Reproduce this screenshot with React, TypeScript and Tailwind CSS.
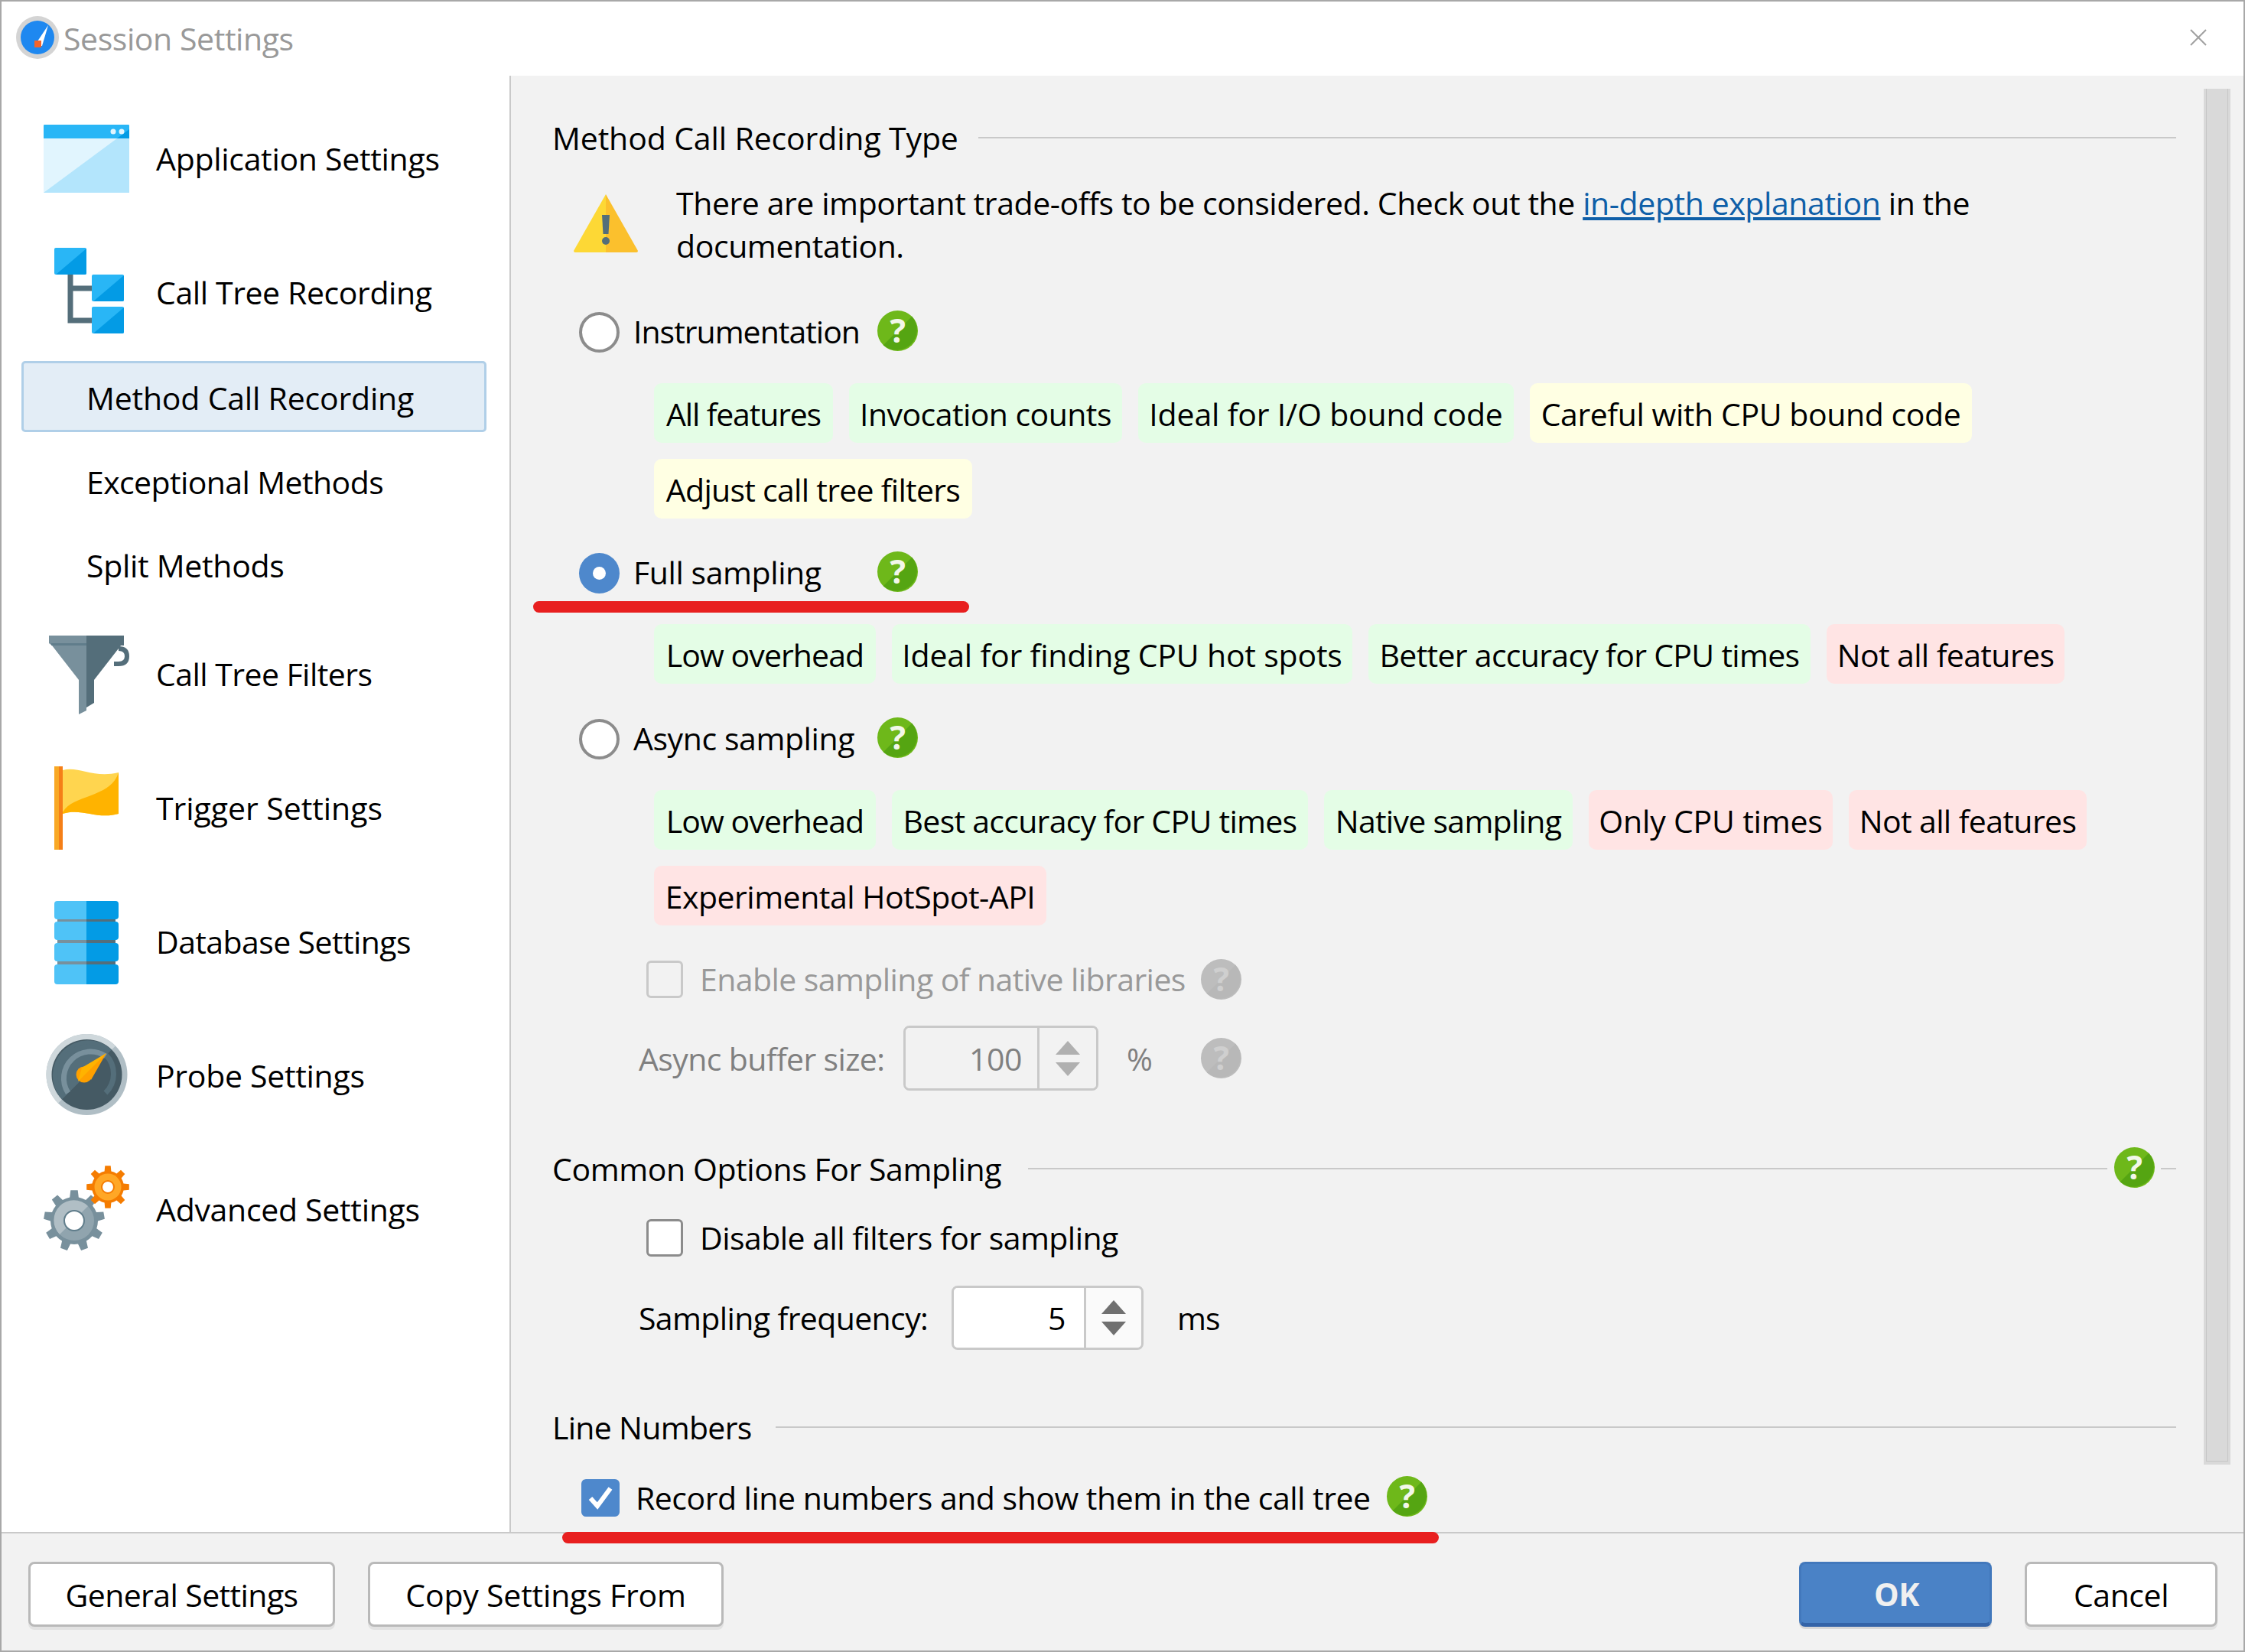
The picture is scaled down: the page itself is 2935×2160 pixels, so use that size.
import React from "react";

function gearPath(cx: number, cy: number, r: number, rr: number, teeth: number) {
  const pts: string[] = [];
  const step = (Math.PI * 2) / teeth;
  for (let i = 0; i < teeth; i++) {
    const a = i * step - Math.PI / 2;
    const seq: [number, number][] = [
      [a - step * 0.5, rr],
      [a - step * 0.27, rr],
      [a - step * 0.17, r],
      [a + step * 0.17, r],
      [a + step * 0.27, rr],
    ];
    for (const [t, d] of seq) {
      pts.push(`${(cx + Math.cos(t) * d).toFixed(1)},${(cy + Math.sin(t) * d).toFixed(1)}`);
    }
  }
  return "M" + pts.join("L") + "Z";
}

const AppIcon = () => (
  <svg width="112" height="112" viewBox="0 0 112 112" className="overflow-visible">
    <rect x="0" y="10" width="112" height="89" fill="#b3e5fc" />
    <path d="M0 28H96L0 99Z" fill="#e1f5fe" />
    <path d="M1 10H111Q112 10 112 12V28H0V12Q0 10 1 10Z" fill="#29b6f6" />
    <path d="M96 28L112 16V28Z" fill="#039be5" />
    <circle cx="91" cy="19" r="3.5" fill="#e1f5fe" />
    <circle cx="102" cy="19" r="3.5" fill="#e1f5fe" />
  </svg>
);

const Sq = ({ x, y }: { x: number; y: number }) => (
  <g>
    <rect x={x} y={y} width="42" height="35" rx="2" fill="#29b6f6" />
    <path d={`M${x + 42} ${y + 1}V${y + 33}Q${x + 42} ${y + 35} ${x + 40} ${y + 35}H${x + 2}Z`} fill="#039be5" />
  </g>
);

const TreeIcon = () => (
  <svg width="112" height="112" viewBox="0 0 112 112" className="overflow-visible">
    <path d="M35 30V91H64M35 49H64" fill="none" stroke="#546e7a" strokeWidth="7" />
    <Sq x={14} y={-4} />
    <Sq x={63} y={31} />
    <Sq x={63} y={73} />
  </svg>
);

const FunnelIcon = () => (
  <svg width="112" height="112" viewBox="0 0 112 112" className="overflow-visible">
    <path d="M92 41H98Q109 41 109 31Q109 21 98 21" fill="none" stroke="#546e7a" strokeWidth="6" />
    <path d="M11 17H56V102L46 107V62Z" fill="#78909c" />
    <path d="M56 17H101L66 62V92L56 98Z" fill="#546e7a" />
    <path d="M7 4H56V17H11L7 14Z" fill="#78909c" />
    <path d="M56 4H105V17H56Z" fill="#546e7a" />
    <rect x="10" y="14" width="46" height="3" fill="#607d8b" />
  </svg>
);

const FlagIcon = () => (
  <svg width="112" height="112" viewBox="0 0 112 112" className="overflow-visible">
    <rect x="14" y="0" width="6" height="109" fill="#f9a825" />
    <rect x="20" y="0" width="5" height="109" fill="#f57f17" />
    <path d="M25 5C45 -1 65 16 98 8V62C70 70 50 54 25 62Z" fill="#ffd54f" />
    <path d="M25 60C32 48 46 44 62 38C80 31 93 24 98 8V62C70 70 50 54 25 62Z" fill="#ffb300" />
  </svg>
);

const DbIcon = () => (
  <svg width="112" height="112" viewBox="0 0 112 112" className="overflow-visible">
    <rect x="18" y="24" width="38" height="62" fill="#78909c" />
    <rect x="56" y="24" width="38" height="62" fill="#546e7a" />
    {[[1, 24], [28, 24], [56, 24], [84, 26]].map(([y, h]) => (
      <g key={y}>
        <path d={`M18 ${y}H56V${y + h}H18Q14 ${y + h} 14 ${y + h - 4}V${y + 4}Q14 ${y} 18 ${y}Z`} fill="#4fc3f7" />
        <path d={`M56 ${y}H94Q98 ${y} 98 ${y + 4}V${y + h - 4}Q98 ${y + h} 94 ${y + h}H56Z`} fill="#039be5" />
      </g>
    ))}
  </svg>
);

const GaugeIcon = () => (
  <svg width="112" height="112" viewBox="0 0 112 112" className="overflow-visible">
    <circle cx="56.5" cy="53" r="53" fill="#b0bec5" />
    <path d="M19 90.5A53 53 0 0 1 94 15.5Z" fill="#cfd8dc" />
    <circle cx="56.5" cy="53" r="46" fill="#455a64" />
    <path d="M24 85.5A46 46 0 0 1 89 20.5Z" fill="#546e7a" />
    <path d="M32 77A35 35 0 1 1 81 77" fill="none" stroke="#546e7a" strokeWidth="7" />
    <path d="M32 77A35 35 0 0 1 81 29" fill="none" stroke="#78909c" strokeWidth="7" />
    <path d="M50 46L82 25L62 60Z" fill="#ffa000" />
    <circle cx="53" cy="53" r="10.5" fill="#ffa000" />
    <path d="M50 44L82 25L45 62Z" fill="#ffb300" />
  </svg>
);

const GearIcon = () => (
  <svg width="112" height="112" viewBox="0 0 112 112" className="overflow-visible">
    <path d={gearPath(40, 69, 40, 31, 9)} fill="#78909c" />
    <path d={gearPath(84, 25, 28, 21, 8)} fill="#f57c00" />
    <circle cx="40" cy="69" r="26" fill="#90a4ae" />
    <path d="M21 87A26 26 0 0 1 58 50Z" fill="#b0bec5" />
    <circle cx="40" cy="69" r="13" fill="#fff" stroke="#607d8b" strokeWidth="2" />
    <circle cx="84" cy="25" r="17.5" fill="#ffa726" />
    <circle cx="84" cy="25" r="8" fill="#fff" stroke="#f57c00" strokeWidth="2" />
  </svg>
);

const Help = ({ off }: { off?: boolean }) => (
  <svg width="53" height="53" viewBox="0 0 53 53" className={`shrink-0 overflow-visible ${off ? "" : "-mt-[4px]"}`}>
    <circle cx="26.5" cy="26.5" r="26.5" fill={off ? "#bdbdbd" : "#6eb81a"} />
    <path d="M45.2 7.8A26.5 26.5 0 0 1 7.8 45.2Z" fill={off ? "#b8b8b8" : "#55a512"} />
    <text x="26.5" y="42" textAnchor="middle" fontSize="43" fontWeight="700" fontFamily="'Open Sans', sans-serif" fill={off ? "#cfcfcf" : "#f2f7ea"}>?</text>
  </svg>
);

const Arrows = ({ color }: { color: string }) => (
  <svg width="32" height="46" viewBox="0 0 32 46">
    <path d="M16 0L32 18H0Z" fill={color} />
    <path d="M16 46L32 28H0Z" fill={color} />
  </svg>
);

const Spinner = ({ value, w, h, field, pr, off }: { value: string; w: string; h: string; field: string; pr: string; off?: boolean }) => (
  <div className={`flex ${w} ${h} border-[3px] border-[#c9c9c9] rounded-[8px] overflow-hidden`}>
    <div className={`${field} ${pr} h-full flex items-center justify-end border-r-[3px] border-[#c9c9c9] ${off ? "bg-[#f2f2f2] text-[#808080]" : "bg-white text-black"}`}>{value}</div>
    <div className={`flex-1 flex items-center justify-center ${off ? "bg-[#f2f2f2]" : "bg-[#fafafa]"}`}>
      <Arrows color={off ? "#b0b0b0" : "#707070"} />
    </div>
  </div>
);

const Radio = ({ on, label, track }: { on?: boolean; label: string; track?: string }) => (
  <div className="flex items-center h-[60px] ml-[34px]">
    {on ? (
      <div className="w-[53px] h-[53px] rounded-full bg-[#4e88cc] flex items-center justify-center shrink-0">
        <div className="w-[17px] h-[17px] rounded-full bg-white" />
      </div>
    ) : (
      <div className="w-[53px] h-[53px] rounded-full bg-white border-[4px] border-[#8c8c8c] shrink-0" />
    )}
    <div className={`w-[319px] ml-[18px] -mt-[2px] whitespace-nowrap ${track ?? ""}`}>{label}</div>
    <Help />
  </div>
);

const Tag = ({ c, t, w, track }: { c: "g" | "y" | "r"; t: string; w: string; track: string }) => (
  <div className={`${w} ${track} h-[78px] pt-[2px] flex items-center justify-center rounded-[10px] whitespace-nowrap shrink-0 ${c === "g" ? "bg-[#e4fde6]" : c === "y" ? "bg-[#ffffe3]" : "bg-[#ffe4e4]"}`}>{t}</div>
);

const Header = ({ t, help, track, gap }: { t: string; help?: boolean; track?: string; gap: string }) => (
  <div className="flex items-center h-[60px]">
    <div className={`whitespace-nowrap -ml-[1px] ${track ?? ""}`}>{t}</div>
    <div className={`flex-1 h-[2px] bg-[#c9c9c9] ${gap}`} />
    {help && (
      <>
        <div className="ml-[9px]"><Help /></div>
        <div className="w-[20px] h-[2px] bg-[#c9c9c9] ml-[8px]" />
      </>
    )}
  </div>
);

const NavBig = ({ icon, label, track }: { icon: React.ReactNode; label: string; track?: string }) => (
  <div className="flex items-center h-[175px]">
    <div className="ml-[55px] w-[112px] h-[112px] shrink-0">{icon}</div>
    <div className={`ml-[35px] -mt-[4px] whitespace-nowrap ${track ?? ""}`}>{label}</div>
  </div>
);

const Btn = ({ t, w, track }: { t: string; w: string; track?: string }) => (
  <div className={`${w} ${track ?? ""} h-[85px] bg-white border-[3px] border-[#b9b9b9] rounded-[8px] shadow-[0_4px_0_#e2e2e2] flex items-center justify-center text-black`}>{t}</div>
);

export default function App() {
  return (
    <div className="relative w-[2935px] h-[2160px] flex flex-col border-2 border-[#a8a8a8] bg-white text-black text-[41px] leading-[56px] tracking-[-0.42px] font-['Open_Sans','Noto_Sans',sans-serif] overflow-hidden">
      {/* title bar */}
      <div className="h-[97px] shrink-0 flex items-center relative bg-white">
        <svg width="56" height="56" viewBox="0 0 56 56" className="ml-[19px] -mt-[4px]">
          <circle cx="28" cy="28" r="28" fill="#d4d4d4" />
          <circle cx="28" cy="28" r="22" fill="#1e88f0" />
          <path d="M42 12L34 39H24Z" fill="#fff" />
          <rect x="24" y="32" width="9" height="9" fill="#f4642c" />
        </svg>
        <div className="ml-[6px] -mt-[2px] text-[#999999]">Session Settings</div>
        <svg width="22" height="22" viewBox="0 0 22 22" className="absolute right-[48px] top-[36px]">
          <path d="M1 1L21 21M21 1L1 21" stroke="#a0a0a0" strokeWidth="2" />
        </svg>
      </div>

      <div className="flex-1 flex min-h-0">
        {/* sidebar */}
        <div className="w-[666px] shrink-0 border-r-[2px] border-[#c9c9c9] bg-white pt-[22px] tracking-[-0.3px]">
          <NavBig icon={<AppIcon />} label="Application Settings" />
          <NavBig icon={<TreeIcon />} label="Call Tree Recording" track="tracking-[-0.4px]" />
          <div className="mt-[1px] ml-[26px] w-[608px] h-[93px] pt-[2px] bg-[#e3edf6] border-[3px] border-[#b0cfe8] rounded-[5px] flex items-center pl-[82px] whitespace-nowrap tracking-[-0.2px]">Method Call Recording</div>
          <div className="mt-[12px] h-[108px] pb-[2px] flex items-center pl-[111px] whitespace-nowrap tracking-[-0.6px]">Exceptional Methods</div>
          <div className="h-[108px] flex items-center pl-[111px] whitespace-nowrap">Split Methods</div>
          <div className="mt-[2px]">
            <NavBig icon={<FunnelIcon />} label="Call Tree Filters" track="tracking-[-0.55px]" />
            <NavBig icon={<FlagIcon />} label="Trigger Settings" track="tracking-[-0.05px]" />
            <NavBig icon={<DbIcon />} label="Database Settings" track="tracking-[-0.6px]" />
            <NavBig icon={<GaugeIcon />} label="Probe Settings" />
            <NavBig icon={<GearIcon />} label="Advanced Settings" />
          </div>
        </div>

        {/* content */}
        <div className="flex-1 flex bg-[#f2f2f2] min-w-0">
          <div className="w-[2122px] ml-[55px] pt-[51px] shrink-0">
            <Header t="Method Call Recording Type" track="tracking-[-0.13px]" gap="ml-[26px]" />
            <div className="mt-[27px] h-[114px] flex items-start">
              <svg width="84" height="76" viewBox="0 0 84 76" className="ml-[27px] mt-[17px] shrink-0">
                <path d="M42 0L84 74Q84 76 82 76H42Z" fill="#fbc02d" />
                <path d="M42 0L0 74Q0 76 2 76H42Z" fill="#fdd835" />
                <path d="M37 27H47L45.5 52H38.5Z" fill="#546e7a" />
                <circle cx="42" cy="61" r="5" fill="#546e7a" />
              </svg>
              <div className="ml-[50px] w-[1900px]">
                There are important trade-offs to be considered. Check out the{" "}
                <span className="text-[#0f5fa8] underline">in-depth explanation</span> in the documentation.
              </div>
            </div>

            <div className="mt-[53px]"><Radio label="Instrumentation" track="tracking-[-1px]" /></div>
            <div className="mt-[37px] ml-[132px] flex flex-col gap-[21px]">
              <div className="flex gap-[21px]">
                <Tag c="g" t="All features" w="w-[234px]" track="tracking-[-1.17px]" />
                <Tag c="g" t="Invocation counts" w="w-[357px]" track="tracking-[-0.56px]" />
                <Tag c="g" t="Ideal for I/O bound code" w="w-[491px]" track="tracking-[-0.17px]" />
                <Tag c="y" t="Careful with CPU bound code" w="w-[578px]" track="tracking-[-0.42px]" />
              </div>
              <div className="flex gap-[21px]">
                <Tag c="y" t="Adjust call tree filters" w="w-[416px]" track="tracking-[-0.72px]" />
              </div>
            </div>

            <div className="mt-[41px]"><Radio on label="Full sampling" /></div>
            <div className="mt-[37px] ml-[132px] flex gap-[21px]">
              <Tag c="g" t="Low overhead" w="w-[290px]" track="tracking-[-0.92px]" />
              <Tag c="g" t="Ideal for finding CPU hot spots" w="w-[602px]" track="tracking-[-0.2px]" />
              <Tag c="g" t="Better accuracy for CPU times" w="w-[578px]" track="tracking-[-0.7px]" />
              <Tag c="r" t="Not all features" w="w-[311px]" track="tracking-[-0.62px]" />
            </div>

            <div className="mt-[42px]"><Radio label="Async sampling" /></div>
            <div className="mt-[37px] ml-[132px] flex flex-col gap-[21px]">
              <div className="flex gap-[21px]">
                <Tag c="g" t="Low overhead" w="w-[290px]" track="tracking-[-0.92px]" />
                <Tag c="g" t="Best accuracy for CPU times" w="w-[544px]" track="tracking-[-0.72px]" />
                <Tag c="g" t="Native sampling" w="w-[325px]" track="tracking-[-0.72px]" />
                <Tag c="r" t="Only CPU times" w="w-[319px]" track="tracking-[-0.2px]" />
                <Tag c="r" t="Not all features" w="w-[311px]" track="tracking-[-0.62px]" />
              </div>
              <div className="flex gap-[21px]">
                <Tag c="r" t="Experimental HotSpot-API" w="w-[513px]" track="tracking-[-0.5px]" />
              </div>
            </div>

            <div className="mt-[40px] h-[60px] flex items-center ml-[122px]">
              <div className="w-[48px] h-[49px] rounded-[6px] border-[3px] border-[#c9c9c9] shrink-0" />
              <div className="ml-[22px] w-[655px] whitespace-nowrap text-[#999999] tracking-[-0.58px]">Enable sampling of native libraries</div>
              <Help off />
            </div>
            <div className="mt-[31px] h-[85px] flex items-center ml-[112px]">
              <div className="w-[346px] whitespace-nowrap text-[#808080] tracking-[-0.62px]">Async buffer size:</div>
              <Spinner value="100" w="w-[255px]" h="h-[85px]" field="w-[175px]" pr="pr-[20px]" off />
              <div className="ml-[37px] w-[97px] text-[#808080]">%</div>
              <Help off />
            </div>

            <div className="mt-[72px]"><Header t="Common Options For Sampling" help gap="ml-[35px]" /></div>
            <div className="mt-[30px] h-[60px] flex items-center ml-[122px]">
              <div className="w-[48px] h-[49px] rounded-[6px] border-[3px] border-[#8c8c8c] bg-white shrink-0" />
              <div className="ml-[22px] whitespace-nowrap tracking-[-0.54px]">Disable all filters for sampling</div>
            </div>
            <div className="mt-[33px] h-[84px] flex items-center ml-[112px]">
              <div className="w-[409px] whitespace-nowrap tracking-[-0.62px]">Sampling frequency:</div>
              <Spinner value="5" w="w-[251px]" h="h-[84px]" field="w-[173px]" pr="pr-[24px]" />
              <div className="ml-[44px] tracking-[-1px]">ms</div>
            </div>

            <div className="mt-[71px]"><Header t="Line Numbers" track="tracking-[-0.7px]" gap="ml-[31px]" /></div>
            <div className="mt-[32px] h-[60px] flex items-center ml-[37px]">
              <div className="w-[50px] h-[49px] rounded-[6px] bg-[#4e88cc] flex items-center justify-center shrink-0">
                <svg width="34" height="32" viewBox="0 0 34 32">
                  <path d="M4 17L13 27L30 4" fill="none" stroke="#fff" strokeWidth="6" />
                </svg>
              </div>
              <div className="ml-[21px] w-[982px] whitespace-nowrap tracking-[-0.5px]">Record line numbers and show them in the call tree</div>
              <Help />
            </div>
          </div>
          <div className="ml-[36px] mt-[17px] w-[35px] h-[1799px] bg-[#d9d9d9] border-x-[3px] border-b-[4px] border-[#d9d9d9] shrink-0">
            <div className="w-full h-full border border-[#c6c6c6] border-t-0" />
          </div>
        </div>
      </div>

      {/* footer */}
      <div className="h-[155px] shrink-0 border-t-[2px] border-[#c9c9c9] bg-[#f2f2f2] flex pt-[37px] pl-[35px] pr-[34px]">
        <Btn t="General Settings" w="w-[401px]" track="tracking-[-0.6px]" />
        <div className="ml-[43px]"><Btn t="Copy Settings From" w="w-[465px]" track="tracking-[-0.2px]" /></div>
        <div className="ml-auto w-[252px] h-[85px] pl-[3px] bg-[#4a82c6] border-[3px] border-[#4278bc] border-b-[5px] border-b-[#3464a8] rounded-[8px] shadow-[0_3px_0_#d8d8d8] flex items-center justify-center font-bold text-[#f0f0f0]">OK</div>
        <div className="ml-[43px]"><Btn t="Cancel" w="w-[252px]" /></div>
      </div>

      {/* red annotation strokes */}
      <div className="absolute left-[695px] top-[784px] w-[570px] h-[15px] rounded-full bg-[#e81f1f]" />
      <div className="absolute left-[733px] top-[2001px] w-[1146px] h-[15px] rounded-full bg-[#e81f1f]" />
    </div>
  );
}
